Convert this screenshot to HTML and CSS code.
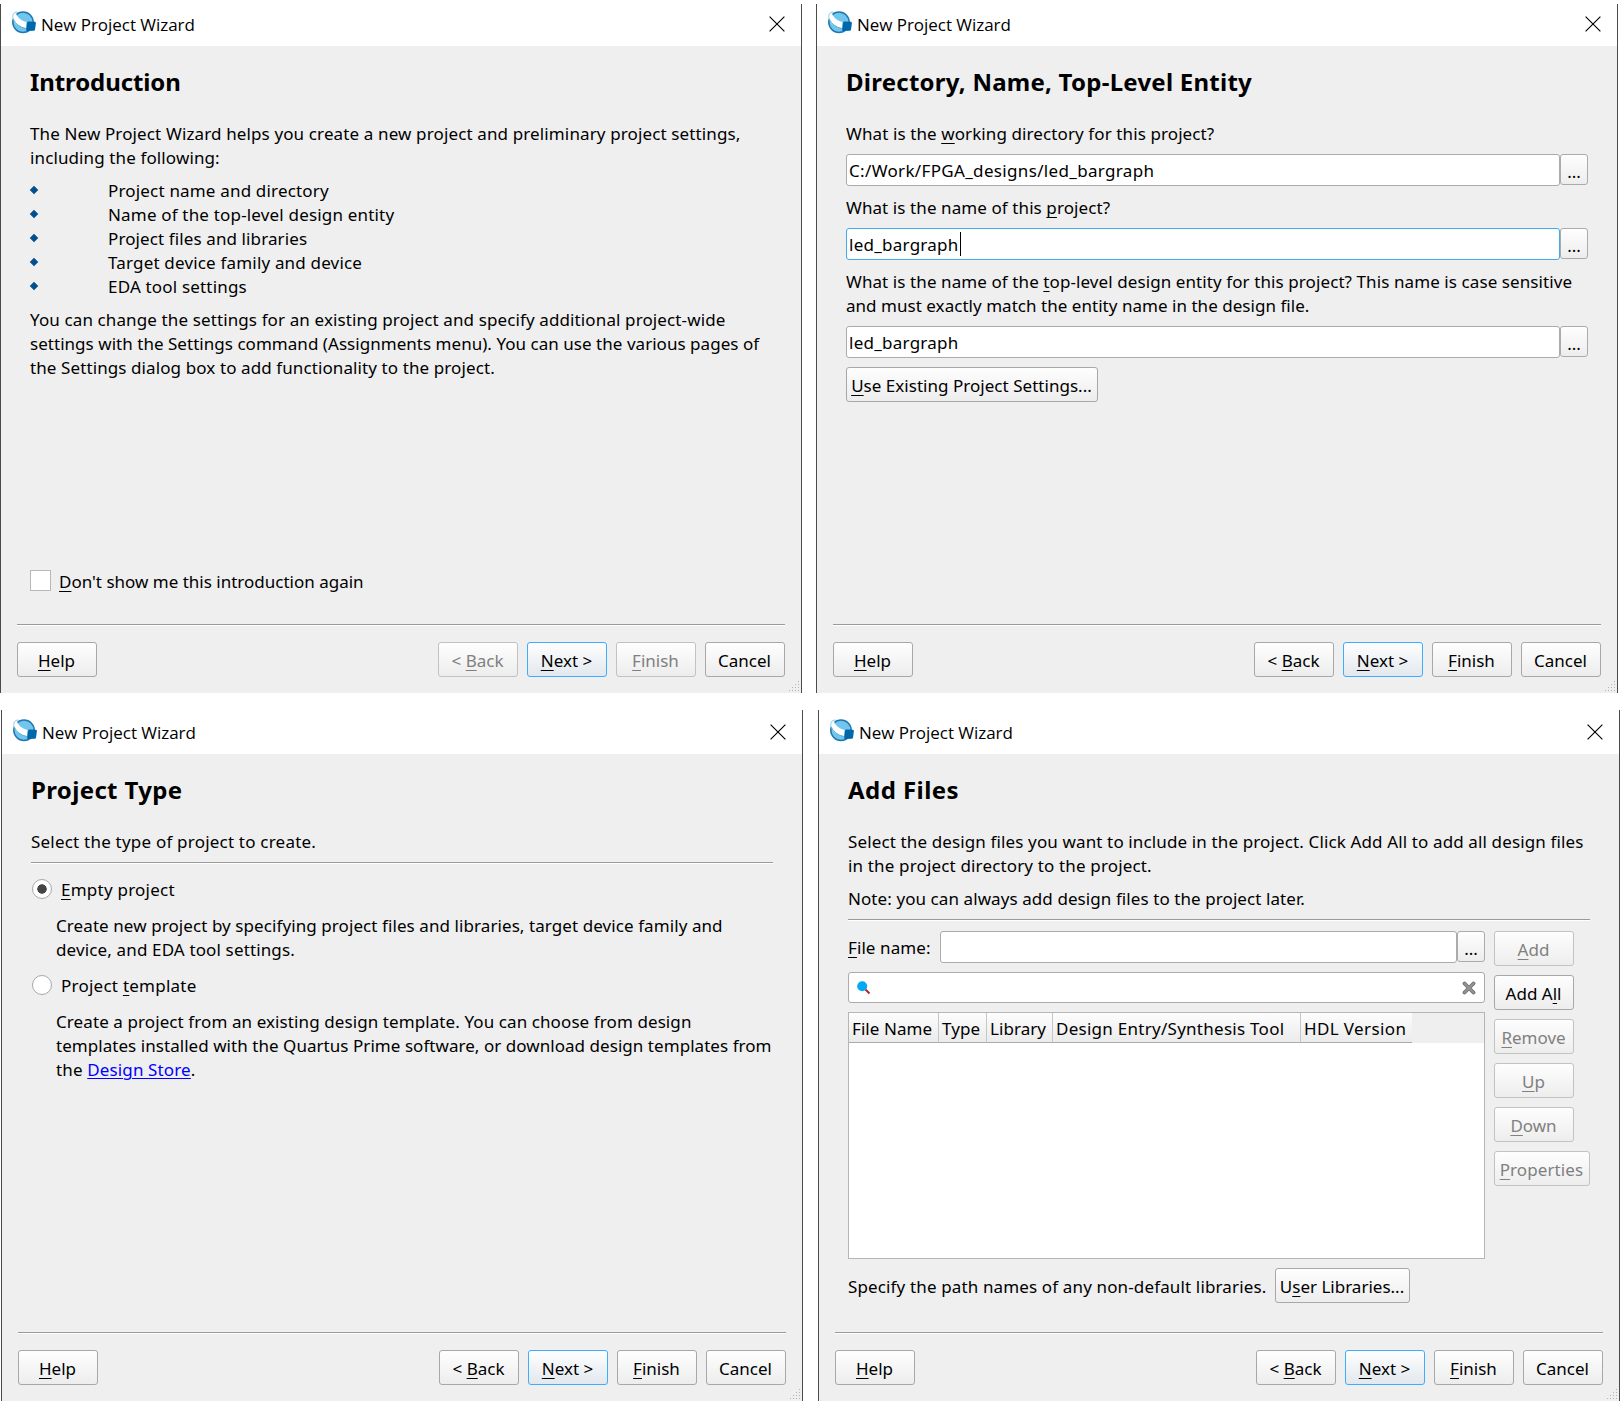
FILE: index.html
```html
<!DOCTYPE html>
<html lang="en">
<head>
<meta charset="utf-8">
<title>New Project Wizard</title>
<link rel="stylesheet" href="styles.css">
</head>
<body>
<svg class="defs" width="0" height="0">
  <symbol id="logo" viewBox="0 0 24 24">
    <circle cx="11" cy="11.3" r="10.2" fill="#72c5ef" stroke="#1f78ad" stroke-width="1.500"/>
    <path d="M.2 5Q.4 1.200 4 .9L4.500 4Q8 9.500 14.500 11L14 17.500Q4.500 16 .8 8Z" fill="#fff"/>
    <path d="M1.200 8.500C.2 4 1 1.200 5.500 1" fill="none" stroke="#8cc8e8" stroke-width="1"/>
    <path d="M1.300 8Q4.500 15.500 14 17.500" fill="none" stroke="#4a9cc8" stroke-width=".8"/>
    <path d="M16.500 10.500l6.500 .3q1 .2.900 1.400l-.9 6.500q-.2 1-1.300 1.100l-6.500 .3q-1.200-.1-1-1.300l.8-7q.2-1.300 1.500-1.300z" fill="#0068a9"/>
  </symbol>
  <symbol id="close" viewBox="0 0 16 16"><path d="M.6.6 15.400 15.400M15.400.6.6 15.400" stroke="#000" stroke-width="1.150" fill="none"/></symbol>
  <symbol id="grip" viewBox="0 0 11 11"><path d="M9 0h1v1h-1zM6 3h1v1h-1zM9 3h1v1h-1zM3 6h1v1h-1zM6 6h1v1h-1zM9 6h1v1h-1zM0 9h1v1h-1zM3 9h1v1h-1zM6 9h1v1h-1zM9 9h1v1h-1z" fill="#b4b4b4"/></symbol>
</svg>

<main class="sheet">
  <div class="pair pair-top">
    <section class="win">
      <header class="title"><svg class="logo"><use href="#logo"/></svg><span class="cap">New Project Wizard</span><svg class="close"><use href="#close"/></svg></header>
      <div class="body">
        <h1 class="h-intro">Introduction</h1>
        <p><span class="ln i1">The New Project Wizard helps you create a new project and preliminary project settings,</span><span class="ln i2">including the following:</span></p>
        <ul>
          <li>Project name and directory</li>
          <li>Name of the top-level design entity</li>
          <li class="snug">Project files and libraries</li>
          <li>Target device family and device</li>
          <li>EDA tool settings</li>
        </ul>
        <p><span class="ln i3">You can change the settings for an existing project and specify additional project-wide</span><span class="ln i4">settings with the Settings command (Assignments menu). You can use the various pages of</span><span class="ln i5">the Settings dialog box to add functionality to the project.</span></p>
        <label class="check"><span class="box"></span><span><u>D</u>on't show me this introduction again</span></label>
      </div>
      <footer><span class="btn"><span><u>H</u>elp</span></span><span class="grow"></span><span class="btn off"><span>&lt; <u>B</u>ack</span></span><span class="btn main"><span><u>N</u>ext &gt;</span></span><span class="btn off"><span><u>F</u>inish</span></span><span class="btn"><span>Cancel</span></span></footer>
      <svg class="grip"><use href="#grip"/></svg>
    </section>

    <section class="win">
      <header class="title"><svg class="logo"><use href="#logo"/></svg><span class="cap">New Project Wizard</span><svg class="close"><use href="#close"/></svg></header>
      <div class="body">
        <h1 class="h-dir">Directory, Name, Top-Level Entity</h1>
        <p><span class="ln d1">What is the <u>w</u>orking directory for this project?</span></p>
        <div class="field"><span class="input path"><span>C:/Work/FPGA_designs/led_bargraph</span></span><span class="dots">...</span></div>
        <p><span class="ln d2">What is the name of this <u>p</u>roject?</span></p>
        <div class="field"><span class="input focus"><span>led_bargraph</span><i class="caret"></i></span><span class="dots">...</span></div>
        <p><span class="ln d3">What is the name of the <u>t</u>op-level design entity for this project? This name is case sensitive</span><span class="ln d4">and must exactly match the entity name in the design file.</span></p>
        <div class="field"><span class="input"><span>led_bargraph</span></span><span class="dots">...</span></div>
        <span class="btn use"><span><u>U</u>se Existing Project Settings...</span></span>
      </div>
      <footer><span class="btn"><span><u>H</u>elp</span></span><span class="grow"></span><span class="btn"><span>&lt; <u>B</u>ack</span></span><span class="btn main"><span><u>N</u>ext &gt;</span></span><span class="btn"><span><u>F</u>inish</span></span><span class="btn"><span>Cancel</span></span></footer>
      <svg class="grip"><use href="#grip"/></svg>
    </section>
  </div>

  <div class="pair pair-bottom">
    <section class="win">
      <header class="title"><svg class="logo"><use href="#logo"/></svg><span class="cap">New Project Wizard</span><svg class="close"><use href="#close"/></svg></header>
      <div class="body">
        <h1 class="h-type">Project Type</h1>
        <p><span class="ln t1">Select the type of project to create.</span></p>
        <div class="rule"></div>
        <div class="options">
          <label class="radio"><span class="dot on"></span><span><u>E</u>mpty project</span></label>
          <p><span class="ln t2">Create new project by specifying project files and libraries, target device family and</span><span class="ln t3">device, and EDA tool settings.</span></p>
          <label class="radio"><span class="dot"></span><span>Project <u>t</u>emplate</span></label>
          <p><span class="ln t4">Create a project from an existing design template. You can choose from design</span><span class="ln t5">templates installed with the Quartus Prime software, or download design templates from</span><span class="ln t6">the <a>Design Store</a>.</span></p>
        </div>
      </div>
      <footer><span class="btn"><span><u>H</u>elp</span></span><span class="grow"></span><span class="btn"><span>&lt; <u>B</u>ack</span></span><span class="btn main"><span><u>N</u>ext &gt;</span></span><span class="btn"><span><u>F</u>inish</span></span><span class="btn"><span>Cancel</span></span></footer>
      <svg class="grip"><use href="#grip"/></svg>
    </section>

    <section class="win">
      <header class="title"><svg class="logo"><use href="#logo"/></svg><span class="cap">New Project Wizard</span><svg class="close"><use href="#close"/></svg></header>
      <div class="body">
        <h1 class="h-add">Add Files</h1>
        <p><span class="ln f1">Select the design files you want to include in the project. Click Add All to add all design files</span><span class="ln f2">in the project directory to the project.</span></p>
        <p><span class="ln f3">Note: you can always add design files to the project later.</span></p>
        <div class="rule"></div>
        <div class="files">
          <div class="left">
            <div class="field"><span class="flabel"><u>F</u>ile name:</span><span class="input"></span><span class="dots">...</span></div>
            <div class="input search">
              <svg width="14" height="14" viewBox="0 0 14 14"><path d="M8.500 8.500l4 4" stroke="#c4161c" stroke-width="1.800"/><circle cx="5.200" cy="5.300" r="5" fill="#03a9f4"/></svg>
              <svg width="14" height="14" viewBox="0 0 14 14"><path d="M2.500 2.500l9 9M11.500 2.500l-9 9" stroke="#6e6e6e" stroke-width="3.800" stroke-linecap="round"/><path d="M2.500 2.500l9 9M11.500 2.500l-9 9" stroke="#949494" stroke-width="2" stroke-linecap="round"/></svg>
            </div>
            <div class="table"><div class="thead"><span>File Name</span><span>Type</span><span>Library</span><span class="tool">Design Entry/Synthesis Tool</span><span class="hdl">HDL Version</span></div></div>
          </div>
          <div class="right">
            <span class="btn off"><span><u>A</u>dd</span></span>
            <span class="btn"><span>Add A<u>l</u>l</span></span>
            <span class="btn off"><span><u>R</u>emove</span></span>
            <span class="btn off"><span><u>U</u>p</span></span>
            <span class="btn off"><span><u>D</u>own</span></span>
            <span class="btn off wide"><span><u>P</u>roperties</span></span>
          </div>
        </div>
        <div class="libs"><span class="ln f4">Specify the path names of any non-default libraries.</span><span class="btn"><span>U<u>s</u>er Libraries...</span></span></div>
      </div>
      <footer><span class="btn"><span><u>H</u>elp</span></span><span class="grow"></span><span class="btn"><span>&lt; <u>B</u>ack</span></span><span class="btn main"><span><u>N</u>ext &gt;</span></span><span class="btn"><span><u>F</u>inish</span></span><span class="btn"><span>Cancel</span></span></footer>
      <svg class="grip"><use href="#grip"/></svg>
    </section>
  </div>
</main>
</body>
</html>
```
FILE: styles.css
```css
* { box-sizing: border-box; }
body { margin: 0; background: #fff; color: #000; font: 17px/24px "Noto Sans", "Open Sans", sans-serif; white-space: nowrap; }
.defs { position: absolute; }
.sheet { width: 1623px; height: 1401px; padding-top: 4px; overflow: hidden; }
.pair { display: flex; }
.pair-top { gap: 14px; margin-bottom: 17px; --bar: 42px; --drop: 0px; }
.pair-bottom { gap: 15px; padding-left: 1px; --bar: 44px; --drop: 2px; }
.win { position: relative; width: 802px; height: calc(var(--bar) + 647px); display: flex; flex-direction: column; background: #efefef; border: 1px solid #4b4b4b; border-width: 0 1px; }
.title { height: var(--bar); background: #fff; display: flex; align-items: center; padding: var(--drop) 16px 4px 11px; flex: none; }
.logo { width: 24px; height: 24px; flex: none; margin-right: 5px; }
.cap { font-family: "Open Sans", "Noto Sans", sans-serif; font-size: 17px; letter-spacing: -.04px; flex: 1; padding-top: 3px; }
.close { width: 16px; height: 16px; margin-top: 1px; }
.body { height: 578px; padding: 18px 29px 0; flex: none; }
h1 { margin: 0 0 21px; font-size: 24px; line-height: 36px; font-weight: 700; }
p { margin: 0 0 8px; padding-top: 1px; }
.ln { display: block; }
u { text-decoration: underline; text-decoration-thickness: 1px; text-underline-offset: 3px; text-decoration-skip-ink: none; }
ul { list-style: none; margin: 0 0 8px; padding: 1px 0 0; }
li { display: flex; align-items: center; letter-spacing: .18px; }
li.snug { letter-spacing: .11px; }
li::before { content: ""; width: 6px; height: 6px; background: #00508f; transform: rotate(45deg); margin: 0 71px 3px 1px; }

/* tracking per line of text */
.h-intro { letter-spacing: -.1px; }
.h-dir { letter-spacing: .25px; }
.h-type { letter-spacing: .35px; }
.h-add { letter-spacing: .45px; }
.i1, .f1 { letter-spacing: .13px; }
.i2, .i3 { letter-spacing: .118px; }
.i4, .d4 { letter-spacing: .035px; }
.i5, .d1 { letter-spacing: .1px; }
.d2, .d3 { letter-spacing: .09px; }
.t1 { letter-spacing: .21px; }
.t2, .f3 { letter-spacing: .082px; }
.t3, .f4, .t6 { letter-spacing: .14px; }
.t4 { letter-spacing: .093px; }
.t5 { letter-spacing: .048px; }
.f2 { letter-spacing: .155px; }

.check { display: flex; gap: 8px; margin-top: 189px; }
.check span:last-child { padding-top: 1px; }
.box { width: 21px; height: 21px; border: 1px solid #b8b8b8; background: #fff; margin-top: 1px; }
footer { display: flex; gap: 9px; margin: 0 16px; padding-top: 17px; border-top: 1px solid #9a9a9a; box-shadow: inset 0 1px #fff; }
.grow { flex: 1; }
.btn { width: 80px; height: 35px; display: flex; align-items: center; justify-content: center; padding: 2px 1px 0 0; border: 1px solid #a8a8a8; border-radius: 3px; background: linear-gradient(#fefefe, #ededed); flex: none; }
.btn.off { color: #808080; border-color: #c2c2c2; }
.btn.main { border-color: #3daeff; background: linear-gradient(#fefefe, #e2e8ee); }
.grip { position: absolute; right: 1px; bottom: 1px; width: 11px; height: 11px; }
.field { display: flex; margin-bottom: 9px; }
.input { flex: 1; height: 32px; display: flex; align-items: center; border: 1px solid #ababab; border-radius: 3px; background: #fff; padding: 2px 2px 0; letter-spacing: .26px; }
.path { letter-spacing: .34px; }
.focus { border-color: #3daee9; }
.caret { width: 1px; height: 24px; background: #000; margin: 0 0 2px 1px; }
.dots { width: 28px; height: 31px; border: 1px solid #ababab; border-radius: 3px; background: linear-gradient(#fefefe, #ededed); text-align: center; line-height: 34px; }
.btn.use { width: 252px; letter-spacing: .03px; }
.rule { height: 2px; background: #9a9a9a; border-bottom: 1px solid #fff; }
.options { padding-top: 13px; }
.options p { margin: 12px 0 11px 25px; }
.radio { display: flex; gap: 9px; height: 24px; padding: 1px 0 0 1px; letter-spacing: .24px; }
.dot { width: 20px; height: 20px; border: 1px solid #a8a8a8; border-radius: 50%; background: #fff; margin-top: 1px; }
.dot.on { background: radial-gradient(circle, #454545 4.400px, #fff 5px); }
a { color: #00f; text-decoration: underline; text-underline-offset: 2px; text-decoration-thickness: 1px; }
.files { display: flex; gap: 9px; padding-top: 10px; }
.left { width: 637px; }
.flabel { width: 92px; padding-top: 5px; letter-spacing: .09px; }
.search { height: 31px; justify-content: space-between; padding: 0 8px 0 8px; margin-bottom: 9px; }
.table { height: 247px; border: 1px solid #b5b5b5; background: #fff; }
.thead { height: 30px; background: #efefef; display: grid; grid-template-columns: 90px 48px 66px 248px 111px; letter-spacing: .06px; }
.thead span { padding: 4px 0 0 3px; border-right: 1px solid #c6c6c6; border-bottom: 1px solid #ababab; background: linear-gradient(#fdfdfd, #ebebeb); }
.thead span:last-child { border-right: 0; }
.thead .tool { letter-spacing: .27px; }
.thead .hdl { letter-spacing: .38px; }
.right { display: flex; flex-direction: column; gap: 9px; }
.btn.wide { width: 96px; letter-spacing: .1px; }
.libs { display: flex; align-items: center; padding-top: 9px; }
.libs .ln { width: 427px; padding-top: 2px; }
.libs .btn { width: 135px; }
```
